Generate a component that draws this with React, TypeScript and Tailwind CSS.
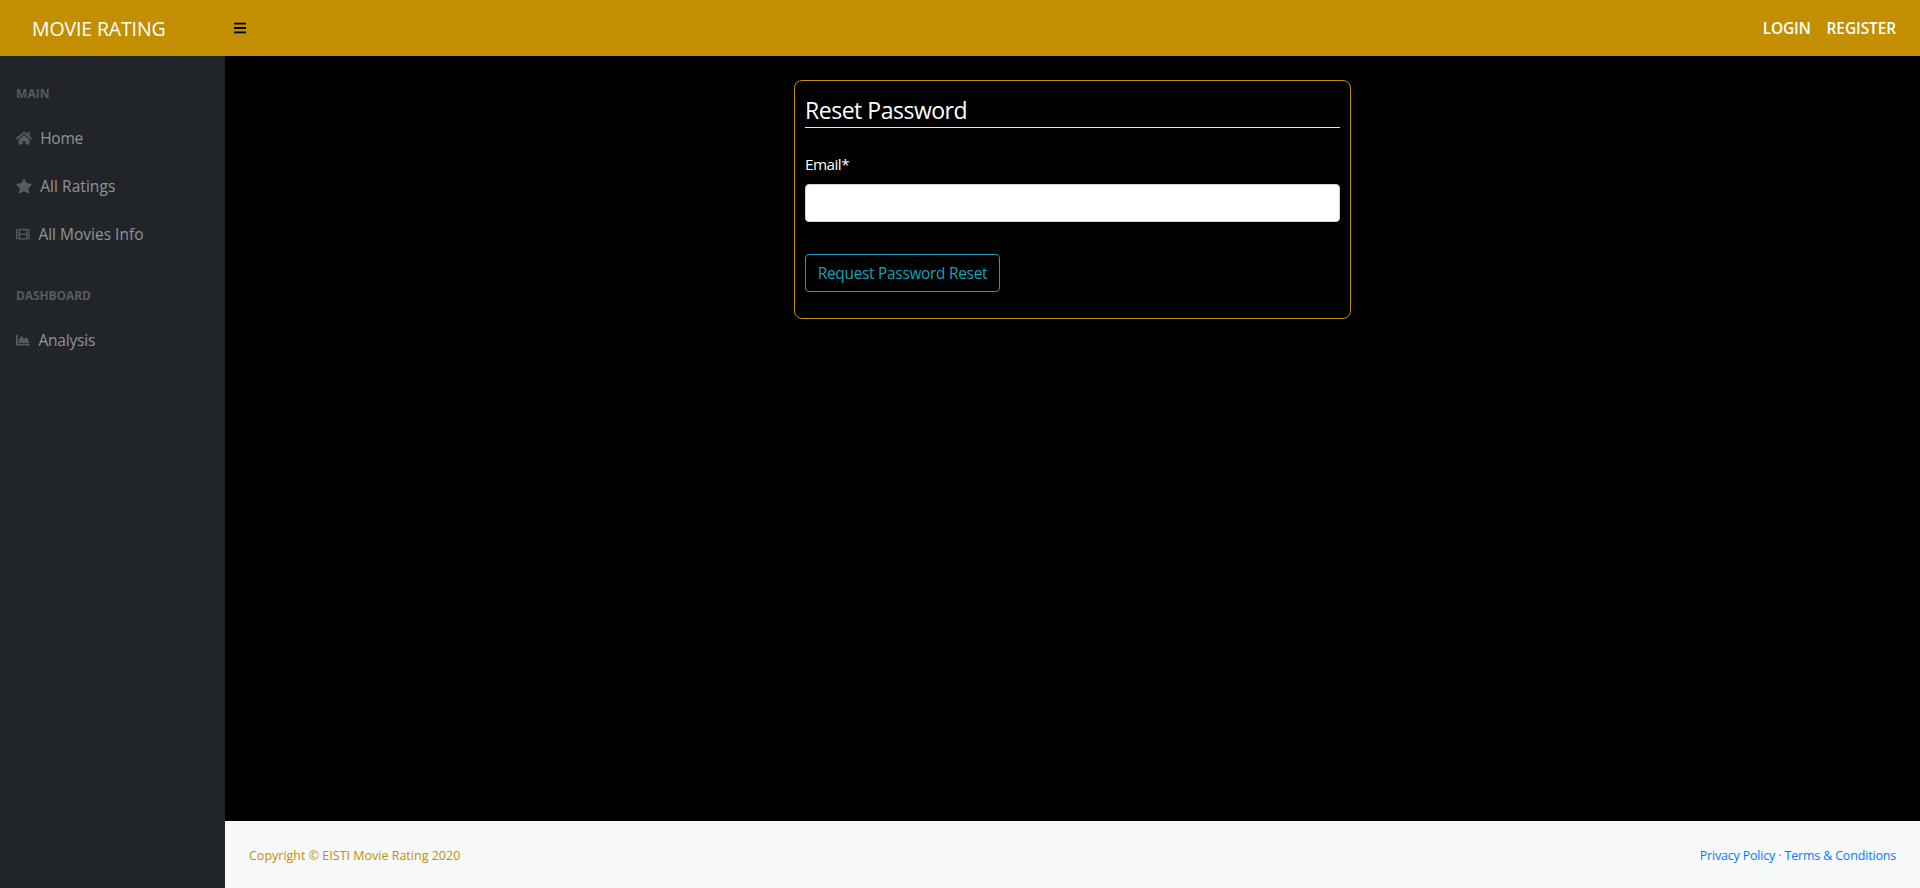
import type { ReactNode } from 'react';
import { FaBars, FaChartArea, FaFilm, FaHome, FaStar } from 'react-icons/fa';

function Heading({ children }: { children: ReactNode }) {
  return <div className="px-4 pt-[29px] pb-[11px] text-[12px] leading-[18px] font-bold text-white/25 uppercase">{children}</div>;
}

function NavItem({ icon, tracking, children }: { icon: ReactNode; tracking: string; children: ReactNode }) {
  return (
    <a href="#" className="flex h-12 items-center gap-2 px-4 text-[15.5px] leading-6 text-white/50">
      <span className="text-white/25">{icon}</span>
      <span className={tracking}>{children}</span>
    </a>
  );
}

export default function App() {
  return (
    <div className="flex h-[888px] flex-col bg-black font-['Open_Sans',sans-serif] text-white">
      <header className="flex h-14 shrink-0 items-center bg-[#c38f00]">
        <a href="#" className="w-[225px] pt-px pl-8 text-[19.5px] leading-[30px] tracking-[-0.13px]">MOVIE RATING</a>
        <button className="ml-[9px] text-black" aria-label="Toggle navigation">
          <FaBars className="h-[14px] w-[12.25px]" />
        </button>
        <nav className="ml-auto flex gap-4 pr-6 text-[15.5px] leading-6 font-semibold">
          <a href="#" className="tracking-[-0.2px]">LOGIN</a>
          <a href="#" className="tracking-[-0.12px]">REGISTER</a>
        </nav>
      </header>
      <div className="flex min-h-0 flex-1">
        <aside className="w-[225px] shrink-0 bg-[#212529]">
          <Heading><span className="tracking-[0.1px]">Main</span></Heading>
          <NavItem icon={<FaHome className="h-[14.4px] w-[16.2px]" />} tracking="tracking-[-0.25px]">Home</NavItem>
          <NavItem icon={<FaStar className="h-[14.4px] w-[16.2px]" />} tracking="tracking-[0.05px]">All Ratings</NavItem>
          <NavItem icon={<FaFilm className="size-[14.4px]" />} tracking="tracking-normal">All Movies Info</NavItem>
          <Heading><span className="tracking-[-0.1px]">Dashboard</span></Heading>
          <NavItem icon={<FaChartArea className="size-[14.4px]" />} tracking="tracking-[-0.2px]">Analysis</NavItem>
        </aside>
        <div className="flex flex-1 flex-col">
          <main className="flex flex-1 items-start justify-center pt-6">
            <form className="h-[239px] w-[557px] rounded-lg border border-[#c38f00] px-[10px] pt-[14px]">
              <h1 className="h-[33px] border-b border-[#e5e5e5] text-[23px] leading-[31px] tracking-[-0.48px]">Reset Password</h1>
              <label htmlFor="email" className="mt-6 block text-[15.3px] leading-6 tracking-[-0.55px]">Email*</label>
              <input id="email" type="email" className="mt-2 block h-[38px] w-full rounded border border-[#ced4da] bg-white px-3 text-[#495057]" />
              <button type="button" className="mt-8 h-[38px] w-[195px] rounded border border-[#17a2b8] pt-0.5 text-[15.4px] leading-6 tracking-[-0.27px] text-[#17a2b8]">Request Password Reset</button>
            </form>
          </main>
          <footer className="flex h-[67px] items-center justify-between bg-[#f8f9fa] px-6 pt-[3px] text-[12.5px] leading-5">
            <div className="text-[#c38f00]">Copyright © EISTI Movie Rating 2020</div>
            <div className="tracking-[-0.18px] text-[#6c757d]">
              <a href="#" className="text-[#007bff]">Privacy Policy</a> · <a href="#" className="text-[#007bff]">Terms &amp; Conditions</a>
            </div>
          </footer>
        </div>
      </div>
    </div>
  );
}
